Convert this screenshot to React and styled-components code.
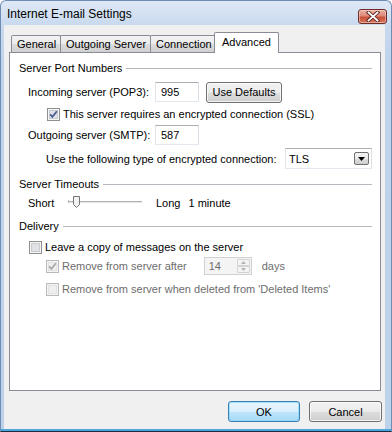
import React from "react";
import styled, { createGlobalStyle } from "styled-components";

const GlobalStyle = createGlobalStyle`
  body {
    margin: 0;
    background: #ffffff;
    font-family: "Liberation Sans", Arial, sans-serif;
    font-size: 11px;
    color: #000;
  }
`;

function CheckBox({ checked, disabled }) {
  return (
    <CheckIcon width="13" height="13" viewBox="0 0 13 13">
      <rect
        x="0.5"
        y="0.5"
        width="12"
        height="12"
        fill={disabled ? "#f4f4f4" : "#f6f6f6"}
        stroke={disabled ? "#b9b9b9" : "#8e8f8f"}
      />
      <rect
        x="2.5"
        y="2.5"
        width="8"
        height="8"
        fill={disabled ? "#efefef" : "#dfe1e5"}
        stroke={disabled ? "#e2e2e2" : "#c9ccd1"}
      />
      {checked && (
        <path
          d="M3.2 6.3 L5.4 8.9 L9.9 3.2"
          fill="none"
          stroke={disabled ? "#a9a9a9" : "#4b5e95"}
          strokeWidth="1.8"
        />
      )}
    </CheckIcon>
  );
}

function Slider() {
  return (
    <svg width="74" height="14" viewBox="0 0 74 14">
      <rect x="0" y="5" width="74" height="1" fill="#b2b2b2" />
      <rect x="0" y="6" width="74" height="1" fill="#e6e6e6" />
      <rect x="0" y="4" width="1" height="3" fill="#b2b2b2" />
      <path
        d="M5.5 0.5 H11.5 V8.5 L8.5 11.5 L5.5 8.5 Z"
        fill="#f3f3f3"
        stroke="#757575"
      />
    </svg>
  );
}

export default function App() {
  return (
    <>
      <GlobalStyle />
      <Window>
        <TitleBar>
          <Title>Internet E-mail Settings</Title>
          <CloseButton>
            <svg width="14" height="11" viewBox="0 0 14 11">
              <path
                d="M2.5 1.5 L11.5 9.5 M11.5 1.5 L2.5 9.5"
                stroke="#5a2420"
                strokeWidth="3.6"
                strokeLinecap="square"
              />
              <path
                d="M2.5 1.5 L11.5 9.5 M11.5 1.5 L2.5 9.5"
                stroke="#ffffff"
                strokeWidth="1.8"
                strokeLinecap="square"
              />
            </svg>
          </CloseButton>
        </TitleBar>
        <Client>
          <TabStrip>
            <Tab $w={50}>General</Tab>
            <Tab $w={91}>Outgoing Server</Tab>
            <Tab $w={66}>Connection</Tab>
            <Tab $w={65} $active>
              Advanced
            </Tab>
          </TabStrip>
          <Panel>
            <GroupHeader>Server Port Numbers</GroupHeader>
            <Row $top={7} $left={9}>
              <FieldLabel>Incoming server (POP3):</FieldLabel>
              <TextBox>995</TextBox>
              <Button $w={76} $gap={7}>
                Use Defaults
              </Button>
            </Row>
            <Row $top={5} $left={28} $h={14}>
              <CheckBox checked />
              <CheckText>This server requires an encrypted connection (SSL)</CheckText>
            </Row>
            <Row $top={4} $left={9}>
              <FieldLabel>Outgoing server (SMTP):</FieldLabel>
              <TextBox>587</TextBox>
            </Row>
            <Row $top={3} $left={27} $h={21}>
              <span>Use the following type of encrypted connection:</span>
              <Select>
                <span>TLS</span>
                <DropButton>
                  <svg width="7" height="4" viewBox="0 0 7 4">
                    <path d="M0 0 H7 L3.5 4 Z" fill="#000" />
                  </svg>
                </DropButton>
              </Select>
            </Row>
            <GroupHeader $top={8}>Server Timeouts</GroupHeader>
            <Row $top={4} $left={9} $h={16}>
              <SliderLabel>Short</SliderLabel>
              <Slider />
              <Spaced $gap={14}>Long</Spaced>
              <Spaced $gap={8}>1 minute</Spaced>
            </Row>
            <GroupHeader $top={8}>Delivery</GroupHeader>
            <Row $top={7} $left={10} $h={14}>
              <CheckBox />
              <CheckText>Leave a copy of messages on the server</CheckText>
            </Row>
            <Row $top={3} $left={27} $h={18}>
              <CheckBox checked disabled />
              <CheckText $disabled>Remove from server after</CheckText>
              <Spinner>
                <SpinValue>14</SpinValue>
                <SpinButtons>
                  <SpinArrow>
                    <svg width="5" height="3" viewBox="0 0 5 3">
                      <path d="M0 3 H5 L2.5 0 Z" fill="#b4b4b4" />
                    </svg>
                  </SpinArrow>
                  <SpinArrow>
                    <svg width="5" height="3" viewBox="0 0 5 3">
                      <path d="M0 0 H5 L2.5 3 Z" fill="#b4b4b4" />
                    </svg>
                  </SpinArrow>
                </SpinButtons>
              </Spinner>
              <Spaced $gap={10} $disabled>
                days
              </Spaced>
            </Row>
            <Row $top={7} $left={27} $h={14}>
              <CheckBox disabled />
              <CheckText $disabled>
                Remove from server when deleted from 'Deleted Items'
              </CheckText>
            </Row>
          </Panel>
          <Footer>
            <Button $w={72} $default>
              OK
            </Button>
            <Button $w={73}>Cancel</Button>
          </Footer>
        </Client>
      </Window>
    </>
  );
}

const Window = styled.div`
  width: 392px;
  height: 432px;
  box-sizing: border-box;
  display: flex;
  flex-direction: column;
  border: 1px solid #6f8db3;
  border-bottom-color: #1d2b3a;
  border-radius: 6px 6px 0 0;
  background: linear-gradient(
    180deg,
    #dfe9f6 0px,
    #c9daef 24px,
    #bfd3ec 60px,
    #bcd1ea 100%
  );
  box-shadow: inset 0 -2px 0 #4aa6dc;
`;

const TitleBar = styled.div`
  height: 24px;
  display: flex;
  align-items: center;
  padding: 0 4px 0 6px;
`;

const Title = styled.div`
  flex: 1;
  font-size: 12px;
  color: #000;
  margin-top: 1px;
`;

const CloseButton = styled.div`
  width: 29px;
  height: 15px;
  margin-top: 6px;
  box-sizing: border-box;
  border: 1px solid #6e2c28;
  border-radius: 3px;
  display: flex;
  align-items: center;
  justify-content: center;
  background: linear-gradient(
    180deg,
    #eab0a3 0%,
    #dc8a78 45%,
    #c9503a 55%,
    #d8785c 100%
  );
  box-shadow: inset 0 0 0 1px rgba(255, 220, 210, 0.5);
`;

const Client = styled.div`
  flex: 1;
  margin: 0 6px 2px 3px;
  padding: 7px 3px 0 5px;
  background: #f0f0f0;
  display: flex;
  flex-direction: column;
`;

const TabStrip = styled.div`
  height: 20px;
  display: flex;
  align-items: flex-end;
  padding-left: 2px;
`;

const Tab = styled.div`
  position: relative;
  box-sizing: border-box;
  width: ${(p) => p.$w}px;
  height: ${(p) => (p.$active ? 21 : 17)}px;
  margin: 0 ${(p) => (p.$active ? -2 : 0)}px
    ${(p) => (p.$active ? -1 : 0)}px ${(p) => (p.$active ? -2 : -1)}px;
  padding: ${(p) => (p.$active ? 3 : 2)}px 0 0
    ${(p) => (p.$active ? 7 : 5)}px;
  border: 1px solid #898c95;
  border-bottom: none;
  border-radius: 2px 2px 0 0;
  z-index: ${(p) => (p.$active ? 2 : 1)};
  background: ${(p) =>
    p.$active
      ? "#ffffff"
      : "linear-gradient(180deg, #f3f3f3 0%, #ebebeb 50%, #dddddd 51%, #d0d0d0 100%)"};
  white-space: nowrap;

  &:first-child {
    margin-left: 0;
  }
`;

const Panel = styled.div`
  position: relative;
  z-index: 1;
  box-sizing: border-box;
  width: 372px;
  height: 339px;
  border: 1px solid #898c95;
  background: #ffffff;
  padding: 8px 8px 0 9px;
  display: flex;
  flex-direction: column;
`;

const GroupHeader = styled.div`
  height: 14px;
  margin-top: ${(p) => p.$top || 0}px;
  display: flex;
  align-items: center;
  white-space: nowrap;

  &::after {
    content: "";
    flex: 1;
    height: 1px;
    margin-left: 4px;
    background: #b5b9bf;
  }
`;

const Row = styled.div`
  height: ${(p) => p.$h || 20}px;
  margin-top: ${(p) => p.$top || 0}px;
  padding-left: ${(p) => p.$left || 0}px;
  display: flex;
  align-items: center;
  white-space: nowrap;
`;

const FieldLabel = styled.span`
  width: 127px;
  flex-shrink: 0;
`;

const TextBox = styled.div`
  box-sizing: border-box;
  width: 44px;
  height: 20px;
  padding: 0 0 0 5px;
  display: flex;
  align-items: center;
  border: 1px solid;
  border-color: #abadb3 #dbdfe6 #e3e9ef #e2e3ea;
  background: #fff;
`;

const Button = styled.div`
  box-sizing: border-box;
  width: ${(p) => p.$w}px;
  height: 21px;
  margin-left: ${(p) => p.$gap || 0}px;
  display: flex;
  align-items: center;
  justify-content: center;
  border: 1px solid ${(p) => (p.$default ? "#3c7fb1" : "#707070")};
  border-radius: 3px;
  background: ${(p) =>
    p.$default
      ? "linear-gradient(180deg, #eaf6fd 0%, #d9f0fc 50%, #bee6fd 51%, #a7d9f5 100%)"
      : "linear-gradient(180deg, #f2f2f2 0%, #ebebeb 50%, #dddddd 51%, #cfcfcf 100%)"};
  box-shadow: inset 0 0 0 1px
    ${(p) => (p.$default ? "rgba(128, 220, 255, 0.7)" : "rgba(255, 255, 255, 0.75)")};
`;

const CheckIcon = styled.svg`
  flex-shrink: 0;
`;

const CheckText = styled.span`
  margin-left: 3px;
  color: ${(p) => (p.$disabled ? "#6d6d6d" : "#000")};
`;

const Select = styled.div`
  box-sizing: border-box;
  width: 87px;
  height: 21px;
  margin-left: auto;
  padding-left: 3px;
  display: flex;
  align-items: center;
  border: 1px solid;
  border-color: #abadb3 #dbdfe6 #e3e9ef #e2e3ea;
  background: #fff;
`;

const DropButton = styled.div`
  box-sizing: border-box;
  width: 15px;
  height: 13px;
  margin: 0 2px 0 auto;
  display: flex;
  align-items: center;
  justify-content: center;
  border: 1px solid #707070;
  border-radius: 2px;
  background: linear-gradient(180deg, #f2f2f2 0%, #ebebeb 50%, #dddddd 51%, #cfcfcf 100%);
`;

const SliderLabel = styled.span`
  width: 40px;
  flex-shrink: 0;
`;

const Spaced = styled.span`
  margin-left: ${(p) => p.$gap}px;
  color: ${(p) => (p.$disabled ? "#6d6d6d" : "#000")};
`;

const Spinner = styled.div`
  box-sizing: border-box;
  width: 48px;
  height: 18px;
  margin-left: 17px;
  display: flex;
  border: 1px solid #cfd1d6;
  background: #f4f4f4;
`;

const SpinValue = styled.div`
  flex: 1;
  padding-left: 4px;
  display: flex;
  align-items: center;
  color: #6d6d6d;
`;

const SpinButtons = styled.div`
  width: 13px;
  margin: 1px 1px 1px 0;
  display: flex;
  flex-direction: column;
`;

const SpinArrow = styled.div`
  flex: 1;
  display: flex;
  align-items: center;
  justify-content: center;
  border: 1px solid #d3d3d3;
  border-radius: 1px;
  background: #f4f4f4;
`;

const Footer = styled.div`
  margin-top: 10px;
  display: flex;
  justify-content: flex-end;
  gap: 9px;
`;
